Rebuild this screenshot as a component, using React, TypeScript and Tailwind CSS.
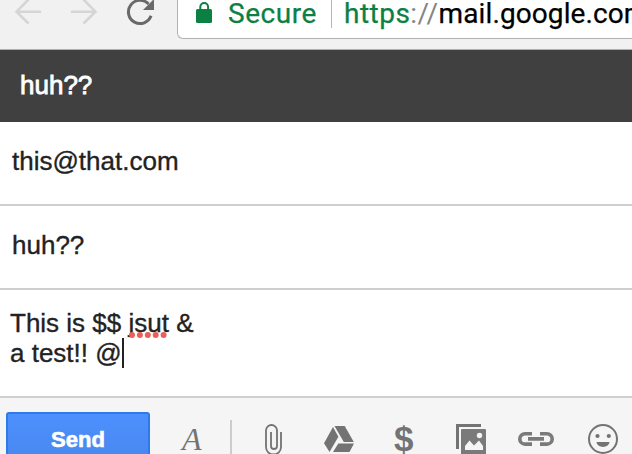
import React from "react";

function BrowserBar() {
  return (
    <div className="flex h-[50px] w-full shrink-0 border-b border-[#b0b0b0] bg-[#f1f1f1]">
      <svg width="177" height="49" viewBox="0 0 177 49" fill="none" className="shrink-0">
        <g stroke="#d5d5d5" strokeWidth="2.6">
          <path d="M41 11.7H17M28.5 -.5L16.5 11.7L28.5 23.5" />
          <path d="M71 11.7H95M83.5 -.5L95.500 11.7L83.500 23.5" />
        </g>
        <path d="M151 15.800A11.600 11.600 0 1 1 148.500 4" stroke="#696969" strokeWidth="3" />
        <path d="M154 -1V10H143Z" fill="#696969" />
      </svg>
      <div className="-mt-2 flex h-[47px] flex-1 items-start overflow-hidden rounded-bl-md border-b border-l border-[#b2b2b2] bg-white pt-2 pl-[18px]">
        <svg width="18" height="24" viewBox="0 0 18 24" className="shrink-0">
          <path d="M4.300 10V7a3.900 3.900 0 0 1 7.800 0V10" fill="none" stroke="#0b8043" strokeWidth="2" />
          <rect x="0" y="9" width="16" height="14" rx="1.500" fill="#0b8043" />
        </svg>
        <span className="mt-[-2px] ml-[14px] w-[103px] shrink-0 font-['Roboto',sans-serif] text-[28px] leading-8 tracking-[0.55px] text-[#0b8043] [-webkit-text-stroke:0.25px_#0b8043]">Secure</span>
        <span className="mt-[-4px] h-8 w-px shrink-0 bg-[#b5b5b5]" />
        <span className="mt-[-2px] ml-3 shrink-0 font-['Roboto',sans-serif] text-[28px] leading-8 tracking-[0.48px] whitespace-nowrap text-black">
          <span className="text-[#0b8043] [-webkit-text-stroke:0.25px_#0b8043]">https</span><span className="text-[#858585]">://</span><span className="tracking-[0.1px] [-webkit-text-stroke:0.25px_black]">mail.google.com</span>
        </span>
      </div>
    </div>
  );
}

function ComposeToolbar() {
  return (
    <div className="flex h-[56px] shrink-0 items-start overflow-hidden bg-[#f5f5f5] pl-[6px]">
      <button className="mt-[14px] h-[56px] w-[144px] shrink-0 rounded-[3px] border-2 border-[#3079ed] bg-linear-to-b from-[#4d90fe] to-[#4787ed] text-center text-[22px] leading-[52px] font-bold text-white [-webkit-text-stroke:0.6px_white]">Send</button>
      <svg width="476" height="56" viewBox="150 398 476 56" className="shrink-0 overflow-visible" fill="none">
        <text x="182" y="450" fill="#737373" fontFamily="Liberation Serif, serif" fontStyle="italic" fontSize="32">A</text>
        <path d="M231 420V454" stroke="#ccc" strokeWidth="2" />
        <path d="M281 432V447A7.500 7.500 0 0 1 266 447V430.500A5.500 5.500 0 0 1 277 430.500V446A2.600 2.600 0 0 1 271 446V432" stroke="#737373" strokeWidth="1.800" />
        <g fill="#737373">
          <path d="M334.500 426H344.700L353.800 442H343.800Z" />
          <path d="M333 427L338.400 436.800L329.500 452L324 443.200Z" />
          <path d="M338.300 443.400H354L349.500 452H333Z" />
        </g>
        <text x="394" y="451" fill="#737373" fontFamily="Liberation Sans, sans-serif" fontWeight="bold" fontSize="35">$</text>
        <path d="M457.500 449V425.500H481" stroke="#737373" strokeWidth="3" />
        <rect x="461" y="429" width="25" height="26" rx="1" fill="#7a7a7a" />
        <path d="M465 450V446L469.500 440.500L474 445.500L479 440.500L483 446V450Z" fill="#f5f5f5" />
        <circle cx="479.500" cy="435.500" r="2.700" fill="#f5f5f5" />
        <path d="M532 433.700H525A5.200 5.200 0 0 0 525 444.100H532M540 433.700H547A5.200 5.200 0 0 1 547 444.100H540M528 438.900H544" stroke="#7a7a7a" strokeWidth="3.600" />
        <circle cx="603" cy="439" r="14" stroke="#737373" strokeWidth="2" />
        <circle cx="597.500" cy="436" r="2.100" fill="#737373" />
        <circle cx="608.800" cy="436" r="2.100" fill="#737373" />
        <path d="M596.500 442H609.500C608.500 448.500 597.500 448.500 596.500 442Z" fill="#737373" />
      </svg>
    </div>
  );
}

export default function App() {
  return (
    <main className="flex h-[454px] w-[632px] flex-col overflow-hidden bg-white font-['Liberation_Sans',Arial,sans-serif] text-[26px] text-[#222]">
      <BrowserBar />
      <header className="h-[72px] shrink-0 bg-[#404040] pl-5 leading-[71px] text-white [-webkit-text-stroke:0.8px_white]">huh??</header>
      <div className="h-[84px] shrink-0 border-b-2 border-[#cfcfcf] pl-3 leading-[79px] [-webkit-text-stroke:0.35px_#222]">this@that.com</div>
      <div className="h-[84px] shrink-0 border-b-2 border-[#cfcfcf] pl-3 leading-[79px] [-webkit-text-stroke:0.35px_#222]">huh??</div>
      <div className="h-[108px] shrink-0 border-b-2 border-[#cfcfcf] pt-[18px] pl-[10px] leading-[30px] [-webkit-text-stroke:0.35px_#222]">
        <div>
          This is $${" "}
          <span className="relative inline-block">
            jsut
            <svg className="absolute top-[24px] left-0" width="42" height="7" viewBox="0 0 42 7" fill="#e9605a">
              <circle cx="3" cy="3" r="3" />
              <circle cx="10.900" cy="3" r="3" />
              <circle cx="18.800" cy="3" r="3" />
              <circle cx="26.700" cy="3" r="3" />
              <circle cx="34.600" cy="3" r="3" />
            </svg>
          </span>{" "}
          &amp;
        </div>
        <div className="flex">
          a test!! @<span className="h-[30px] w-[2px] bg-[#222]" />
        </div>
      </div>
      <ComposeToolbar />
    </main>
  );
}
